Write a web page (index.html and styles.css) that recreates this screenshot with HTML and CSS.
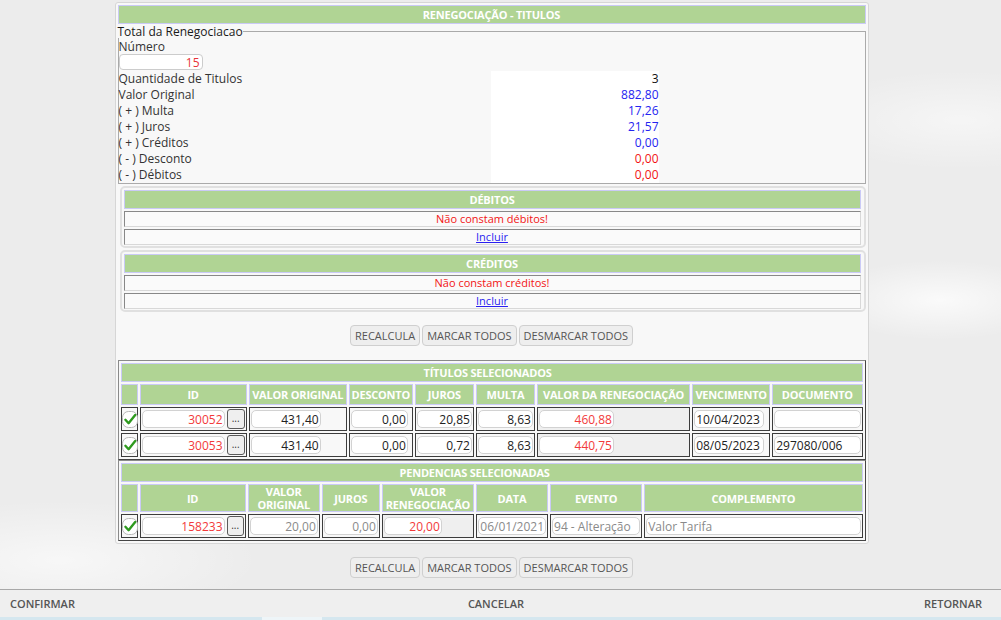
FILE: index.html
```html
<!DOCTYPE html>
<html lang="pt-BR">
<head>
<meta charset="utf-8">
<title>Renegociação - Títulos</title>
<link rel="stylesheet" href="styles.css">
</head>
<body>
<div class="page">
  <div class="panel">
    <div class="title">RENEGOCIAÇÃO - TITULOS</div>
    <fieldset class="totals">
      <legend>Total da Renegociacao</legend>
      <div class="lbl">Número</div>
      <input class="num" type="text" value="15">
      <table class="sum">
        <tr><td class="k">Quantidade de Titulos</td><td class="v black">3</td></tr>
        <tr><td class="k">Valor Original</td><td class="v blue">882,80</td></tr>
        <tr><td class="k">( + ) Multa</td><td class="v blue">17,26</td></tr>
        <tr><td class="k">( + ) Juros</td><td class="v blue">21,57</td></tr>
        <tr><td class="k">( + ) Créditos</td><td class="v blue">0,00</td></tr>
        <tr><td class="k">( - ) Desconto</td><td class="v red">0,00</td></tr>
        <tr><td class="k">( - ) Débitos</td><td class="v red">0,00</td></tr>
      </table>
    </fieldset>

    <div class="box">
      <div class="bhead">DÉBITOS</div>
      <div class="brow red">Não constam débitos!</div>
      <div class="brow"><a href="#">Incluir</a></div>
    </div>
    <div class="box second">
      <div class="bhead">CRÉDITOS</div>
      <div class="brow red">Não constam créditos!</div>
      <div class="brow"><a href="#">Incluir</a></div>
    </div>

    <div class="btns">
      <button>RECALCULA</button><button>MARCAR TODOS</button><button>DESMARCAR TODOS</button>
    </div>

    <table class="grid tit">
      <colgroup>
        <col class="c-chk"><col class="c-id"><col class="c-vo"><col class="c-desc"><col class="c-jur"><col class="c-mul"><col class="c-vr"><col class="c-venc"><col class="c-doc">
      </colgroup>
      <tr class="ghead"><th colspan="9">TÍTULOS SELECIONADOS</th></tr>
      <tr class="chead">
        <th></th><th>ID</th><th>VALOR ORIGINAL</th><th>DESCONTO</th><th>JUROS</th><th>MULTA</th><th>VALOR DA RENEGOCIAÇÃO</th><th>VENCIMENTO</th><th>DOCUMENTO</th>
      </tr>
      <tr>
        <td class="chk"><svg width="16" height="17" viewBox="0 0 16 17"><rect x="0.5" y="0.5" width="15" height="16" rx="6" fill="#fff" stroke="#b8b8b8"/><path d="M3.4 8.8 L6.6 12.2 L13.2 4" fill="none" stroke="#2e9a1e" stroke-width="2.4" stroke-linecap="round" stroke-linejoin="round"/></svg></td>
        <td><div class="idw"><input class="in red w-id" value="30052"><span class="dots">...</span></div></td>
        <td><input class="in w70" value="431,40"></td>
        <td><input class="in w57" value="0,00"></td>
        <td><input class="in full" value="20,85"></td>
        <td><input class="in full" value="8,63"></td>
        <td class="gray"><input class="in red w75" value="460,88"></td>
        <td><input class="in w70 left" value="10/04/2023"></td>
        <td><input class="in full left" value=""></td>
      </tr>
      <tr>
        <td class="chk"><svg width="16" height="17" viewBox="0 0 16 17"><rect x="0.5" y="0.5" width="15" height="16" rx="6" fill="#fff" stroke="#b8b8b8"/><path d="M3.4 8.8 L6.6 12.2 L13.2 4" fill="none" stroke="#2e9a1e" stroke-width="2.4" stroke-linecap="round" stroke-linejoin="round"/></svg></td>
        <td><div class="idw"><input class="in red w-id" value="30053"><span class="dots">...</span></div></td>
        <td><input class="in w70" value="431,40"></td>
        <td><input class="in w57" value="0,00"></td>
        <td><input class="in full" value="0,72"></td>
        <td><input class="in full" value="8,63"></td>
        <td class="gray"><input class="in red w75" value="440,75"></td>
        <td><input class="in w70 left" value="08/05/2023"></td>
        <td><input class="in full left" value="297080/006"></td>
      </tr>
    </table>

    <table class="grid pend">
      <colgroup>
        <col class="p-chk"><col class="p-id"><col class="p-vo"><col class="p-jur"><col class="p-vr"><col class="p-data"><col class="p-ev"><col class="p-comp">
      </colgroup>
      <tr class="ghead"><th colspan="8">PENDENCIAS SELECIONADAS</th></tr>
      <tr class="chead two">
        <th></th><th>ID</th><th>VALOR<br>ORIGINAL</th><th>JUROS</th><th>VALOR<br>RENEGOCIAÇÃO</th><th>DATA</th><th>EVENTO</th><th>COMPLEMENTO</th>
      </tr>
      <tr>
        <td class="chk"><svg width="16" height="17" viewBox="0 0 16 17"><rect x="0.5" y="0.5" width="15" height="16" rx="6" fill="#fff" stroke="#b8b8b8"/><path d="M3.4 8.8 L6.6 12.2 L13.2 4" fill="none" stroke="#2e9a1e" stroke-width="2.4" stroke-linecap="round" stroke-linejoin="round"/></svg></td>
        <td><div class="idw"><input class="in red w-id" value="158233"><span class="dots">...</span></div></td>
        <td><input class="in full dim" value="20,00"></td>
        <td><input class="in full dim" value="0,00"></td>
        <td class="gray"><input class="in red w58" value="20,00"></td>
        <td><input class="in full dim" value="06/01/2021"></td>
        <td><input class="in full dim left" value="94 - Alteração"></td>
        <td><input class="in full dim left" value="Valor Tarifa"></td>
      </tr>
    </table>
  </div>

  <div class="btns bottom">
    <button>RECALCULA</button><button>MARCAR TODOS</button><button>DESMARCAR TODOS</button>
  </div>
</div>

<div class="footer">
  <span class="f-left">CONFIRMAR</span>
  <span class="f-mid">CANCELAR</span>
  <span class="f-right">RETORNAR</span>
</div>
<div class="strip"><span class="chunk"></span></div>
</body>
</html>
```

FILE: styles.css
```css
* { box-sizing: border-box; }

html, body {
  margin: 0;
  height: 620px;
  overflow: hidden;
}

body {
  font-family: "Open Sans", "Noto Sans", "Liberation Sans", sans-serif;
  font-size: 12px;
  color: #333;
  background-color: #ececec;
  background-image:
    radial-gradient(ellipse 120px 40px at 940px 300px, rgba(255,255,255,0.75), rgba(255,255,255,0)),
    radial-gradient(ellipse 200px 60px at 60px 560px, rgba(255,255,255,0.6), rgba(255,255,255,0)),
    radial-gradient(ellipse 160px 50px at 960px 120px, rgba(255,255,255,0.5), rgba(255,255,255,0));
}

.page {
  width: 983px;
  height: 589px;
  padding-top: 2px;
  display: flex;
  flex-direction: column;
  align-items: center;
}

.panel {
  width: 754px;
  border: 1px solid #d6d6d6;
  border-radius: 3px;
  background: #f8f8f8;
  padding: 2px;
}

.title,
.bhead,
.grid th {
  background: #b0d494;
  border: 1px solid #cacaf6;
  color: #fff;
  font-weight: 700;
  font-size: 11px;
  text-align: center;
  letter-spacing: -0.2px;
}

.title {
  height: 19px;
  line-height: 17px;
}

/* totals */
.totals {
  margin: 1px 0 0;
  padding: 0;
  border: 1px solid #aaa;
  min-width: 0;
}

.totals legend {
  padding: 0;
  margin: 0 0 0 -1px;
  line-height: 13px;
  color: #1a1a1a;
}

.lbl {
  height: 16px;
  line-height: 18px;
}

.num {
  display: block;
  width: 84px;
  height: 16px;
  margin: 0;
  padding: 0 2px;
  border: 1px solid #ccc;
  border-radius: 4px;
  background: #fff;
  font: 12px "Open Sans", "Noto Sans", sans-serif;
  color: #e8333a;
  text-align: right;
}

.sum {
  border-collapse: collapse;
  width: 540px;
  margin-top: 1px;
}

.sum td {
  padding: 0;
  height: 16px;
  line-height: 16px;
}

.sum .k { width: 372px; }

.sum .v {
  width: 168px;
  background: #fff;
  text-align: right;
}

.black { color: #111; }
.blue { color: #2424f0; }
.red { color: #f21414; }

/* boxes */
.box {
  margin: 2px 0 0 2px;
  border: 2px solid #e0e0e0;
  border-radius: 5px;
  padding: 2px 3px 1px 2px;
}

.box.second { margin-top: 2px; }

.bhead {
  height: 19px;
  line-height: 17px;
}

.brow {
  margin-top: 2px;
  height: 16px;
  line-height: 14px;
  border: 1px solid;
  border-color: #888 #d8d8d8 #d8d8d8 #888;
  background: #fafafa;
  text-align: center;
  font-size: 11px;
}

.brow a { color: #2a1ff0; }

/* buttons */
.btns {
  display: flex;
  justify-content: center;
  gap: 2px;
  margin: 13px 0 14px;
}

.btns.bottom { margin: 13px 0 0; }

.btns button {
  height: 21px;
  padding: 0 4px;
  border: 1px solid #cfcfcf;
  border-radius: 4px;
  background: #eee;
  color: #555;
  font: 500 11px "Open Sans", "Noto Sans", sans-serif;
}

/* grids */
.grid {
  width: 100%;
  table-layout: fixed;
  border-spacing: 2px;
  border: 1px solid;
  border-color: #8a8a8a #444 #444 #8a8a8a;
  background: #f8f8f8;
}

.grid .ghead th {
  height: 19px;
  padding: 0 0 0 302px;
  text-align: left;
}

.grid.pend .ghead th { padding-left: 278px; }

.grid .chead th {
  height: 21px;
  padding: 0;
  white-space: nowrap;
  overflow: hidden;
}

.grid .chead.two th {
  height: 27px;
  line-height: 13px;
}

.grid td {
  border: 1px solid #3c3c3c;
  padding: 1px;
  height: 22px;
  background: #f8f8f8;
}

.grid td.gray { background: #efefef; }

.grid td.chk {
  padding: 0;
  vertical-align: middle;
}

.grid td.chk svg { display: block; margin: 0 auto; }

.c-chk { width: 17px; }
.c-id { width: 107px; }
.c-vo { width: 98px; }
.c-desc { width: 64px; }
.c-jur { width: 59px; }
.c-mul { width: 59px; }
.c-vr { width: 153px; }
.c-venc { width: 78px; }
.c-doc { width: 90px; }

.p-chk { width: 17px; }
.p-id { width: 106px; }
.p-vo { width: 72px; }
.p-jur { width: 58px; }
.p-vr { width: 92px; }
.p-data { width: 72px; }
.p-ev { width: 92px; }
.p-comp { width: 218px; }

.in {
  display: block;
  height: 18px;
  margin: 0;
  padding: 0 1px;
  border: 1px solid #d2d2d2;
  border-radius: 5px;
  background: #fff;
  font: 12px "Open Sans", "Noto Sans", sans-serif;
  color: #222;
  text-align: right;
}

.in.red { color: #f23a3a; }
.in.dim { color: #8a8a8a; }
.in.left { text-align: left; }

.full { width: 100%; }
.w70 { width: 70px; }
.w57 { width: 57px; }
.w75 { width: 75px; }
.w58 { width: 58px; }
.w-id { width: 83px; }

.idw {
  display: flex;
  align-items: center;
  gap: 2px;
}

.dots {
  width: 19px;
  height: 20px;
  border: 1px solid #5a5a5a;
  border-radius: 3px;
  background: #efefef;
  color: #333;
  font-size: 10px;
  line-height: 17px;
  text-align: center;
}

/* footer */
.footer {
  height: 28px;
  border-top: 1px solid #a8a8a8;
  background: #efefef;
  display: grid;
  grid-template-columns: 1fr auto 1fr;
  align-items: center;
  padding: 0 19px 0 10px;
  font-size: 11px;
  font-weight: 600;
  color: #555;
}

.f-right { text-align: right; }

.strip {
  height: 3px;
  background: #d5e7ef;
  display: flex;
}

.chunk {
  width: 60px;
  margin-left: 262px;
  background: #eef5f8;
}
```
